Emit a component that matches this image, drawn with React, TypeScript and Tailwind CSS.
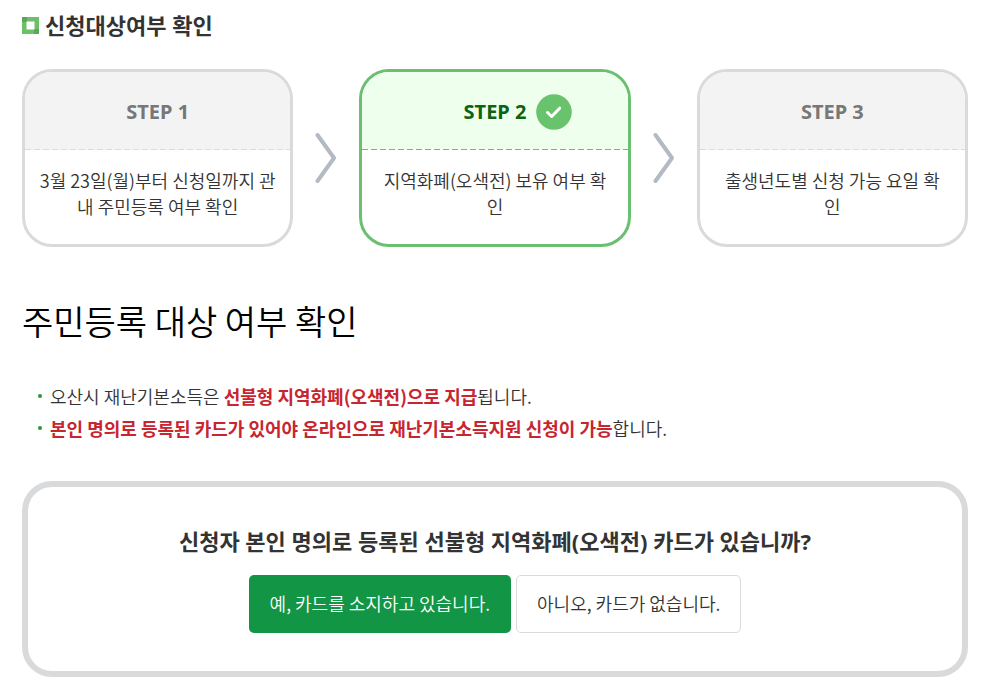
import React from "react";

import clsx from "clsx";

const steps = [
  { title: "STEP 1", text: "3월 23일(월)부터 신청일까지 관\n내 주민등록 여부 확인" },
  { title: "STEP 2", text: "지역화폐(오색전) 보유 여부 확\n인", active: true },
  { title: "STEP 3", text: "출생년도별 신청 가능 요일 확\n인" },
];

const SquareIcon = () => (
  <svg className="h-[17px] w-[17px] shrink-0" viewBox="0 0 17 17" aria-hidden="true">
    <path fill="#6cc067" d="M0 0h17v17H0z" />
    <path fill="#5fa35c" d="M0 0h5v5H0zM12 12h5v5h-5z" />
    <path fill="#fff" d="M4.500 4.500h8v8h-8z" />
  </svg>
);

const CheckIcon = () => (
  <svg className="h-9 w-9 shrink-0" viewBox="0 0 36 36" aria-hidden="true">
    <circle cx="18" cy="18" r="17.8" fill="#68c36c" />
    <path
      d="M11.500 18.500l4.200 4 8-8.300"
      fill="none"
      stroke="#fff"
      strokeWidth="3"
      strokeLinecap="round"
      strokeLinejoin="round"
    />
  </svg>
);

const ArrowIcon = () => (
  <svg className="h-[52px] w-[22px]" viewBox="0 0 22 52" aria-hidden="true">
    <path
      d="M2.500 3l16.500 23-16.500 23"
      fill="none"
      stroke="#b3bac4"
      strokeWidth="4"
      strokeLinecap="round"
      strokeLinejoin="round"
    />
  </svg>
);

const StepCard = ({ title, text, active }: { title: string; text: string; active?: boolean }) => (
  <li
    className={clsx(
      "flex-1 overflow-hidden rounded-[30px] border-3 text-center",
      active ? "border-[#6bbf70]" : "border-[#d9dadb]"
    )}
  >
    <div
      className={clsx(
        "flex h-[77px] items-center justify-center gap-[10px] pt-0.5 font-['Noto_Sans',sans-serif] text-xl font-bold",
        active ? "bg-[#efffee] pl-[46px] text-[#0b6410]" : "bg-[#f3f3f3] text-[#777]"
      )}
    >
      <h3>{title}</h3>
      {active && <CheckIcon />}
    </div>
    <div
      className={clsx(
        "h-px",
        active
          ? "bg-[repeating-linear-gradient(90deg,#6bbf70_0_6px,#efffee_6px_9px)]"
          : "bg-[repeating-linear-gradient(90deg,#d9dadb_0_6px,#f3f3f3_6px_9px)]"
      )}
    />
    <p className="px-2 pt-[17px] pb-[25px] text-lg leading-[26px] whitespace-pre-line">{text}</p>
  </li>
);

export default function App() {
  return (
    <main className="bg-white pt-[7px] pr-[17px] pb-6 pl-[22px] font-['Noto_Sans_CJK_KR',sans-serif] font-[350] text-[#333]">
      <h1 className="flex items-center gap-[6px] font-['Noto_Sans','Noto_Sans_CJK_KR',sans-serif] text-[22px] leading-9 font-bold">
        <SquareIcon />
        신청대상여부 확인
      </h1>

      <ol className="mt-[26px] flex">
        {steps.map((step, i) => (
          <React.Fragment key={step.title}>
            {i > 0 && (
              <li className="flex w-[66px] shrink-0 items-center justify-center" aria-hidden="true">
                <ArrowIcon />
              </li>
            )}
            <StepCard {...step} />
          </React.Fragment>
        ))}
      </ol>

      <h2 className="mt-12 text-[34px] leading-[52px] text-black">주민등록 대상 여부 확인</h2>

      <ul className="mt-[33px] text-lg leading-8">
        {[
          <>
            오산시 재난기본소득은 <strong className="font-bold text-[#c7252f]">선불형 지역화폐(오색전)으로 지급</strong>
            됩니다.
          </>,
          <>
            <strong className="font-bold text-[#c7252f]">
              본인 명의로 등록된 카드가 있어야 온라인으로 재난기본소득지원 신청이 가능
            </strong>
            합니다.
          </>,
        ].map((item, i) => (
          <li key={i} className="flex items-center gap-2 pl-4">
            <span className="h-1 w-1 shrink-0 rounded-full bg-[#2a9a35]" />
            <p>{item}</p>
          </li>
        ))}
      </ul>

      <section className="mt-[37px] rounded-[30px] border-6 border-[#d9dadc] px-4 pt-9 pb-[38px] text-center">
        <h2 className="font-['Noto_Sans','Noto_Sans_CJK_KR',sans-serif] text-[22px] leading-9 font-bold">
          신청자 본인 명의로 등록된 선불형 지역화폐(오색전) 카드가 있습니까?
        </h2>
        <div className="mt-4 flex flex-wrap justify-center gap-[5px] text-lg">
          <button type="button" className="h-[58px] rounded-[5px] bg-[#129545] px-[21px] pb-0.5 text-white">
            예, 카드를 소지하고 있습니다.
          </button>
          <button type="button" className="h-[58px] rounded-[5px] border border-[#d9dadc] bg-white px-5 pb-0.5">
            아니오, 카드가 없습니다.
          </button>
        </div>
      </section>
    </main>
  );
}
